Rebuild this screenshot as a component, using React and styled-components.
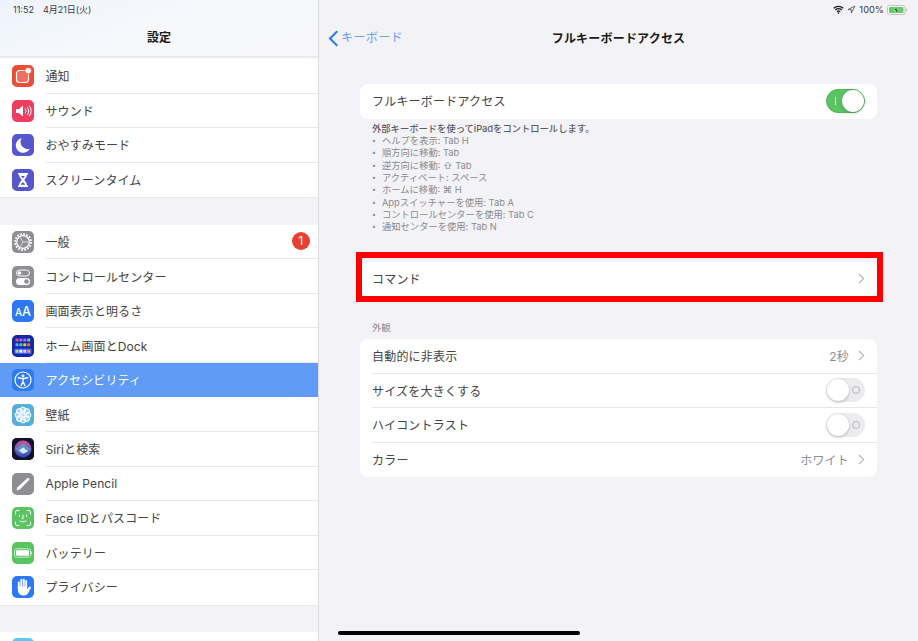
import React from 'react';
import styled, { createGlobalStyle } from 'styled-components';

const FONT = '"Inter", "Noto Sans CJK JP", "Noto Sans", sans-serif';

const GlobalStyle = createGlobalStyle`
  html, body {
    margin: 0;
    padding: 0;
    background: #f2f2f7;
  }
  * {
    box-sizing: border-box;
  }
`;

const Screen = styled.div`
  position: relative;
  display: flex;
  width: 918px;
  height: 641px;
  overflow: hidden;
  font-family: ${FONT};
  background: #f2f2f7;
`;

const Sidebar = styled.aside`
  flex: 0 0 319px;
  height: 641px;
  overflow: hidden;
  border-right: 1px solid #dcdce0;
  background: #f2f2f7;
`;

const SideHeader = styled.header`
  height: 57px;
  margin-bottom: 2px;
  padding: 4px 13px 0;
  background: linear-gradient(160deg, #edf3fc 0%, #f6f8fc 45%, #f8f8fb 100%);
  border-bottom: 1px solid #e6e6ea;
`;

const StatusTime = styled.div`
  display: flex;
  gap: 9px;
  height: 11px;
  font-size: 9px;
  line-height: 11px;
  color: #3a3a3c;
`;

const SideTitle = styled.h1`
  margin: 14px 0 0;
  font-size: 12px;
  line-height: 17px;
  font-weight: 600;
  text-align: center;
  color: #1a1a1a;
`;

const Group = styled.div`
  margin-bottom: 26.5px;
  background: #fff;
  border-bottom: 1px solid #e8e8ec;
`;

const Row = styled.div`
  display: flex;
  align-items: center;
  height: 34.55px;
  padding-left: 12px;
  background: ${props => (props.$selected ? '#5f9bf7' : '#fff')};
  color: ${props => (props.$selected ? '#fff' : '#444446')};
`;

const IconBox = styled.div`
  flex: 0 0 22px;
  display: flex;
  align-items: center;
  justify-content: center;
  width: 22px;
  height: 22px;
  border-radius: 5px;
  overflow: hidden;
  background: ${props => props.$bg};

  svg {
    display: block;
    width: 22px;
    height: 22px;
  }
`;

const RowBody = styled.div`
  flex: 1;
  display: flex;
  align-items: center;
  justify-content: space-between;
  align-self: stretch;
  margin-left: 11.5px;
  padding-right: 8px;
  font-size: 12px;
  letter-spacing: 0.1px;
  border-bottom: 1px solid ${props => (props.$last ? 'transparent' : '#e5e5ea')};
`;

const Badge = styled.span`
  display: flex;
  align-items: center;
  justify-content: center;
  width: 18px;
  height: 18px;
  border-radius: 50%;
  font-size: 11.5px;
  background: #e9402f;
  color: #fff;
`;

const Main = styled.main`
  flex: 1;
  display: flex;
  flex-direction: column;
  padding: 0 41px;
`;

const StatusRight = styled.div`
  display: flex;
  justify-content: flex-end;
  align-items: center;
  gap: 3px;
  height: 18px;
  margin-right: -30px;
  padding-top: 1px;
  font-size: 9.3px;
  color: #3a3a3c;
`;

const NavBar = styled.nav`
  position: relative;
  display: flex;
  align-items: center;
  justify-content: center;
  height: 38px;
  margin-bottom: 28px;
  padding-top: 3px;
`;

const BackLink = styled.div`
  position: absolute;
  left: -32px;
  top: 10px;
  display: flex;
  align-items: center;
  gap: 2px;
  font-size: 12px;
  letter-spacing: 0.4px;
  line-height: 20px;
  color: #6a9ff5;

  svg {
    display: block;
  }
`;

const NavTitle = styled.h2`
  margin: 0;
  font-size: 12px;
  font-weight: 600;
  letter-spacing: 0.2px;
  line-height: 20px;
  color: #1a1a1a;
`;

const Card = styled.section`
  position: relative;
  background: #fff;
  border-radius: 8px;
`;

const CardRow = styled.div`
  display: flex;
  align-items: center;
  justify-content: space-between;
  height: 34.5px;
  margin-left: 12px;
  padding-right: 12px;
  font-size: 12px;
  letter-spacing: 0.2px;
  color: #444446;
  border-bottom: 1px solid ${props => (props.$last ? 'transparent' : '#e5e5ea')};
`;

const RowValue = styled.div`
  display: flex;
  align-items: center;
  gap: 9px;
  color: #8e8e93;
`;

const Help = styled.div`
  padding: 4px 12px 0;
  height: 143px;
  font-size: 9.3px;
  line-height: 12.35px;
  color: #8a8a8e;
`;

const HelpLead = styled.div`
  font-weight: 500;
  color: #5c5c60;
`;

const HelpList = styled.ul`
  margin: 0;
  padding: 0;
  list-style: none;
`;

const HelpItem = styled.li`
  display: flex;
  gap: 6px;

  &::before {
    content: '•';
    font-size: 7px;
  }
`;

const SectionLabel = styled.div`
  margin: 25px 0 0;
  padding-left: 12px;
  height: 18px;
  font-size: 9.3px;
  line-height: 13px;
  color: #8a8a8e;
`;

const Highlight = styled.div`
  position: absolute;
  top: -10px;
  right: -6px;
  bottom: -6px;
  left: -4px;
  border: 6px solid #f00;
  pointer-events: none;
`;

const Track = styled.div`
  position: relative;
  width: 39px;
  height: 24px;
  border-radius: 12px;
  background: ${props => (props.$on ? '#5dc264' : '#ececee')};
  border: 1px solid ${props => (props.$on ? '#4cbb55' : '#e9e9eb')};
`;

const Knob = styled.span`
  position: absolute;
  top: 0;
  ${props => (props.$on ? 'right: 0;' : 'left: 0;')}
  width: 22px;
  height: 22px;
  border-radius: 50%;
  background: #fff;
  box-shadow: 0 1px 3px rgba(0, 0, 0, 0.25);
`;

const OnMark = styled.span`
  position: absolute;
  left: 8px;
  top: 7px;
  width: 1px;
  height: 8px;
  background: #d5f0d7;
`;

const OffMark = styled.span`
  position: absolute;
  right: 4px;
  top: 7px;
  width: 8px;
  height: 8px;
  border: 1px solid #b4b4b8;
  border-radius: 50%;
`;

const HomeBar = styled.div`
  position: absolute;
  left: 338px;
  top: 631px;
  width: 242px;
  height: 4px;
  border-radius: 2px;
  background: #000;
`;

const Chevron = () => (
  <svg width="7" height="11" viewBox="0 0 7 11" fill="none">
    <path d="M1 1l4.6 4.5L1 10" stroke="#b9b9bd" strokeWidth="1.3" />
  </svg>
);

const Toggle = ({ on }) => (
  <Track $on={on}>
    {on ? <OnMark /> : <OffMark />}
    <Knob $on={on} />
  </Track>
);

const Wifi = () => (
  <svg width="11" height="9" viewBox="0 0 11 9" fill="none" stroke="#222" strokeWidth="1.3">
    <path d="M.7 3.2a7 7 0 0 1 9.6 0M2.3 5a4.7 4.7 0 0 1 6.4 0M3.9 6.7a2.3 2.3 0 0 1 3.2 0" />
    <circle cx="5.5" cy="7.9" r=".6" fill="#222" strokeWidth=".5" />
  </svg>
);

const Location = () => (
  <svg width="9" height="9" viewBox="0 0 9 9" fill="none" stroke="#444" strokeWidth=".8">
    <path d="M8 1L1 4.6h3.3V8z" strokeLinejoin="round" />
  </svg>
);

const Battery = () => (
  <svg width="20" height="10" viewBox="0 0 20 10">
    <rect x=".5" y=".5" width="17.500" height="9" rx="2" fill="#fff" stroke="#c4c4c4" />
    <rect x="2" y="2" width="14.500" height="6" rx="1" fill="#5fd063" />
    <rect x="18.600" y="3.500" width="1.200" height="3" rx=".6" fill="#b5b5b5" />
    <path d="M10.300 1.200L7 5.500h2.200L8.300 8.800l3.400-4.300H9.500z" fill="#111" stroke="#e8f8e8" strokeWidth=".5" />
  </svg>
);

const BackChevron = () => (
  <svg width="11" height="17" viewBox="0 0 11 17" fill="none">
    <path d="M9.300 1.300L2 8.500l7.300 7.200" stroke="#1f7bf2" strokeWidth="2" />
  </svg>
);

const NoticeIcon = () => (
  <svg viewBox="0 0 22 22">
    <rect x="4.500" y="5.500" width="12" height="12" rx="3" fill="#f0705f" stroke="#fff" strokeWidth="1.200" />
    <circle cx="16.200" cy="5.700" r="3.300" fill="#fff" stroke="#ea4d38" strokeWidth=".8" />
  </svg>
);

const SoundIcon = () => (
  <svg viewBox="0 0 22 22" fill="none">
    <path d="M4 9h3l4-3.600v11.200L7 13H4z" fill="#fff" />
    <path d="M13 8.600a3.400 3.400 0 0 1 0 4.800M15 7a5.600 5.600 0 0 1 0 8M17 5.600a7.800 7.800 0 0 1 0 10.800" stroke="#fff" strokeWidth="1" />
  </svg>
);

const MoonIcon = () => (
  <svg viewBox="0 0 22 22">
    <path d="M9.600 4.200a7.400 7.400 0 1 0 8.200 10.600A7.200 7.200 0 0 1 9.600 4.200z" fill="#fff" />
  </svg>
);

const HourglassIcon = () => (
  <svg viewBox="0 0 22 22">
    <path d="M6 4h10v1.600h-1c0 3-2.400 4-2.600 5.400.2 1.400 2.600 2.400 2.600 5.400h1V18H6v-1.600h1c0-3 2.400-4 2.600-5.400C9.400 9.600 7 8.600 7 5.600H6z" fill="#fff" />
    <path d="M9 7h4l-2 2.600zM8.800 15.800c.3-1.300 1.400-1.900 2.200-2.800.8.900 1.900 1.500 2.200 2.800z" fill="#5856cf" />
  </svg>
);

const GearIcon = () => (
  <svg viewBox="0 0 22 22" fill="none">
    <circle cx="11" cy="11" r="8" stroke="#fff" strokeWidth="1.800" strokeDasharray="1.800 1.340" />
    <circle cx="11" cy="11" r="6.300" stroke="#fff" strokeWidth="1.300" />
    <path d="M11 11L8.200 6.500M11 11l-2.800 4.500M11 11h5.300" stroke="#fff" strokeWidth=".7" />
  </svg>
);

const SwitchesIcon = () => (
  <svg viewBox="0 0 22 22">
    <rect x="4.500" y="4" width="13" height="6" rx="3" fill="none" stroke="#fff" />
    <circle cx="7.500" cy="7" r="1.800" fill="#fff" />
    <rect x="4" y="12" width="14" height="7" rx="3.500" fill="#fff" />
    <circle cx="14.500" cy="15.500" r="2.300" fill="#8e8e93" />
  </svg>
);

const TextSizeIcon = () => (
  <svg viewBox="0 0 22 22">
    <text x="3" y="16" fontSize="10" fontFamily="Inter, sans-serif" fontWeight="500" fill="#fff">A</text>
    <text x="10" y="16" fontSize="12.500" fontFamily="Inter, sans-serif" fontWeight="500" fill="#fff">A</text>
  </svg>
);

const dockColors = [
  ['#e0566d', '#b868d8', '#a070e0', '#6fd06f'],
  ['#4fb0f0', '#4fd0a0', '#f2c13c', '#e8703c'],
  ['#9fe08f', '#f0f4fc', '#c4d7fa', '#f0a040'],
];

const HomeIcon = () => (
  <svg viewBox="0 0 22 22">
    <rect x="2.500" y="13.500" width="17" height="5.500" rx="1" fill="#4a5fe8" />
    {dockColors.map((colors, y) =>
      colors.map((color, x) => (
        <rect key={`${x}-${y}`} x={3.500 + x * 3.900} y={[3.500, 8.300, 14.800][y]} width="3" height="3" rx=".6" fill={color} />
      ))
    )}
  </svg>
);

const AccessIcon = () => (
  <svg viewBox="0 0 22 22" fill="none">
    <circle cx="11" cy="11" r="8" stroke="#fff" strokeWidth="1.200" />
    <circle cx="11" cy="6.800" r="1.400" fill="#fff" />
    <path d="M6.300 8.800c3 .8 6.400.8 9.400 0M11 9.500v3M11 12.500l-2 4.200M11 12.500l2 4.200" stroke="#fff" strokeWidth="1.400" strokeLinecap="round" />
  </svg>
);

const petals = [0, 45, 90, 135, 180, 225, 270, 315];

const FlowerIcon = () => (
  <svg viewBox="0 0 22 22" fill="none" stroke="#fff" strokeWidth="1">
    {petals.map(angle => (
      <circle key={angle} cx="11" cy="5.800" r="2.700" fill="rgba(255,255,255,.45)" transform={`rotate(${angle} 11 11)`} />
    ))}
    <circle cx="11" cy="11" r="2.200" fill="rgba(255,255,255,.6)" />
  </svg>
);

const SiriIcon = () => (
  <svg viewBox="0 0 22 22">
    <defs>
      <linearGradient id="siriOrb" x1="0" y1="0" x2="0" y2="1">
        <stop offset="0%" stopColor="#d0529c" />
        <stop offset="45%" stopColor="#7a5bb0" />
        <stop offset="100%" stopColor="#2b49c8" />
      </linearGradient>
    </defs>
    <rect width="22" height="22" fill="#11122e" />
    <circle cx="11" cy="11" r="8.500" fill="url(#siriOrb)" />
    <path d="M2.500 11c3.500-.5 5-5 8.500-5s5 4.500 8.500 5c-3.500 1-5 5-8.500 5s-5-4-8.500-5z" fill="#42c6cf" opacity=".55" />
    <path d="M6.500 12.500c2 0 3-3 4.500-3s2.500 3 4.500 3-3 3-4.500 3-2.500-3-4.500-3z" fill="#f2f2fa" opacity=".85" />
  </svg>
);

const PencilIcon = () => (
  <svg viewBox="0 0 22 22" fill="none">
    <path d="M4.500 17.500l1-3.200L15.800 4.700l2 1.600-9.800 10z" fill="#fff" />
  </svg>
);

const FaceIcon = () => (
  <svg viewBox="0 0 22 22" fill="none" stroke="#fff" strokeWidth="1" strokeLinecap="round">
    <path d="M3.500 7V5a1.500 1.500 0 0 1 1.500-1.500h2M15 3.500h2A1.500 1.500 0 0 1 18.500 5v2M18.500 15v2a1.500 1.500 0 0 1-1.500 1.500h-2M7 18.500H5A1.500 1.500 0 0 1 3.500 17v-2" />
    <path d="M7.500 8v1.500M14.500 8v1.500M11 8v3.500h-.8M8 14c1.800 1.200 4.200 1.200 6 0" />
  </svg>
);

const BatteryIcon = () => (
  <svg viewBox="0 0 22 22">
    <rect x="2.500" y="6.800" width="16" height="8.400" rx="2" fill="none" stroke="#c4eec6" />
    <rect x="4" y="8.300" width="13" height="5.400" rx="1" fill="#fff" />
    <rect x="19" y="9.500" width="1" height="3" rx=".5" fill="#c4eec6" />
  </svg>
);

const HandIcon = () => (
  <svg viewBox="0 0 22 22">
    <path d="M6.800 12V6.500M9.300 11V3.800M11.800 11V3.600M14.200 12V5" stroke="#fff" strokeWidth="1.900" strokeLinecap="round" />
    <path d="M5.900 10.500h9.200v2.800l2-2.400c1-1 2.300 0 1.700 1.200l-2.800 5.200c-.9 1.500-2.200 2.200-4 2.200-3.600 0-6.100-2-6.100-5.500z" fill="#fff" />
  </svg>
);

const groups = [
  [
    { id: 'notice', label: '通知', bg: '#ec4d37', Icon: NoticeIcon },
    { id: 'sound', label: 'サウンド', bg: '#ee3d5d', Icon: SoundIcon },
    { id: 'moon', label: 'おやすみモード', bg: '#5856cf', Icon: MoonIcon },
    { id: 'time', label: 'スクリーンタイム', bg: '#5856cf', Icon: HourglassIcon },
  ],
  [
    { id: 'general', label: '一般', bg: '#8e8e93', Icon: GearIcon, badge: '1' },
    { id: 'control', label: 'コントロールセンター', bg: '#8e8e93', Icon: SwitchesIcon },
    { id: 'display', label: '画面表示と明るさ', bg: '#2c78f6', Icon: TextSizeIcon },
    { id: 'home', label: 'ホーム画面とDock', bg: '#1626a8', Icon: HomeIcon },
    { id: 'access', label: 'アクセシビリティ', bg: '#2f7af3', Icon: AccessIcon, selected: true },
    { id: 'wall', label: '壁紙', bg: '#55aedb', Icon: FlowerIcon },
    { id: 'siri', label: 'Siriと検索', bg: '#15173c', Icon: SiriIcon },
    { id: 'pencil', label: 'Apple Pencil', bg: '#8e8e93', Icon: PencilIcon },
    { id: 'face', label: 'Face IDとパスコード', bg: '#5ac463', Icon: FaceIcon },
    { id: 'battery', label: 'バッテリー', bg: '#5ac463', Icon: BatteryIcon },
    { id: 'privacy', label: 'プライバシー', bg: '#2c78f6', Icon: HandIcon },
  ],
  [{ id: 'store', label: '', bg: '#5ac8fa', Icon: () => null }],
];

const helpItems = [
  'ヘルプを表示: Tab H',
  '順方向に移動: Tab',
  '逆方向に移動: ⇧ Tab',
  'アクティベート: スペース',
  'ホームに移動: ⌘ H',
  'Appスイッチャーを使用: Tab A',
  'コントロールセンターを使用: Tab C',
  '通知センターを使用: Tab N',
];

const App = () => (
  <Screen>
    <GlobalStyle />
    <Sidebar>
      <SideHeader>
        <StatusTime>
          <span>11:52</span>
          <span>4月21日(火)</span>
        </StatusTime>
        <SideTitle>設定</SideTitle>
      </SideHeader>
      {groups.map((rows, groupIndex) => (
        <Group key={groupIndex}>
          {rows.map(({ id, label, bg, Icon, badge, selected }, index) => (
            <Row key={id} $selected={selected}>
              <IconBox $bg={bg}>
                <Icon />
              </IconBox>
              <RowBody $last={selected || index === rows.length - 1}>
                {label}
                {badge && <Badge>{badge}</Badge>}
              </RowBody>
            </Row>
          ))}
        </Group>
      ))}
    </Sidebar>
    <Main>
      <StatusRight>
        <Wifi />
        <Location />
        <span>100%</span>
        <Battery />
      </StatusRight>
      <NavBar>
        <BackLink>
          <BackChevron />
          キーボード
        </BackLink>
        <NavTitle>フルキーボードアクセス</NavTitle>
      </NavBar>
      <Card>
        <CardRow $last>
          フルキーボードアクセス
          <Toggle on />
        </CardRow>
      </Card>
      <Help>
        <HelpLead>外部キーボードを使ってiPadをコントロールします。</HelpLead>
        <HelpList>
          {helpItems.map(item => (
            <HelpItem key={item}>{item}</HelpItem>
          ))}
        </HelpList>
      </Help>
      <Card>
        <CardRow $last>
          コマンド
          <Chevron />
        </CardRow>
        <Highlight />
      </Card>
      <SectionLabel>外観</SectionLabel>
      <Card>
        <CardRow>
          自動的に非表示
          <RowValue>
            2秒
            <Chevron />
          </RowValue>
        </CardRow>
        <CardRow>
          サイズを大きくする
          <Toggle />
        </CardRow>
        <CardRow>
          ハイコントラスト
          <Toggle />
        </CardRow>
        <CardRow $last>
          カラー
          <RowValue>
            ホワイト
            <Chevron />
          </RowValue>
        </CardRow>
      </Card>
    </Main>
    <HomeBar />
  </Screen>
);

export default App;
